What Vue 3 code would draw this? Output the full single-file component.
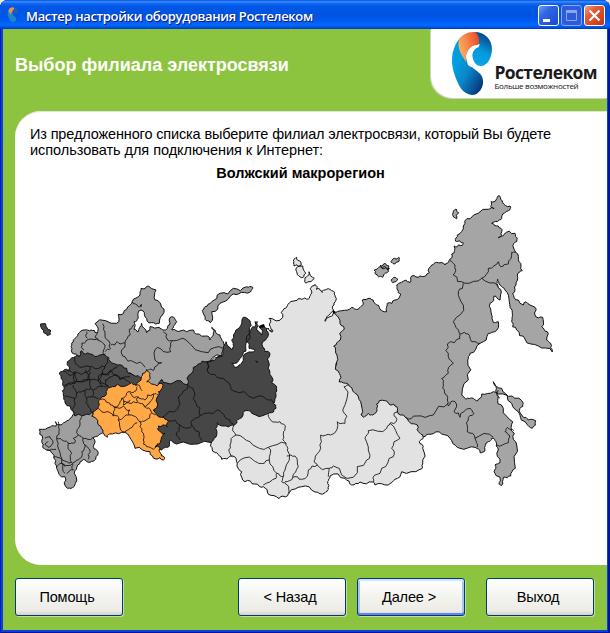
<script setup>
const macroRegions = [
  {
    name: 'far-east',
    shapes: [
      '333.3,311.7 341.7,310.7 351.7,307.3 358.3,309.3 361.7,306 362.3,300 370,298.3 375,303.3 380,309.3 386.7,311.7 387.3,303.3 395,300 400.7,294 397.7,290 396.7,285 406,280 410,282.7 411.7,276 420,276 429.3,272.7 431.7,265 436.7,262.3 445,265 449,260.7 451.7,254 454,246 456,247 462,245.5 463.5,243 460,241 455.5,241 457.3,235 463.3,226 470,218.8 488.3,209.3 494,209 490.7,206.7 491,201.7 496,199.5 499.3,195.7 502.7,202.7 510,206 508.3,210.7 502.7,214 501.7,218.3 497.3,221.7 491.7,223.3 498.3,226 501.7,231.7 498.3,237.7 504,234.3 515,233.3 517.3,238.3 514,243.3 515.7,252.3 519,261.7 522.3,270.7 517.3,275 516,285 512.7,293.3 518.3,300 523.3,305 526,301.7 535,307.3 535,315 542.7,317.3 541.7,326.7 547.3,331.7 546.7,340 550.7,343.3 552.3,352 538.3,346 525,339 516.7,330 511.7,321.7 512.3,313.3 509.3,301.7 505,290 500,285 497.7,279.3 496.7,283.3 500.7,289.3 500,300 494,296 490,303.3 491.7,315 493,322 498.3,321.7 495,331.7 488.3,333.3 480,343.3 470,353.3 467.7,360 468.3,380 466,399.3 473.3,398.3 477.3,401 481.7,394 493.3,391.7 498.3,396.7 503.3,408.3 512.7,421.7 514.3,433.3 516.7,445 515.3,468.3 510.7,476 503.3,477.3 501,485.7 499,484.3 500,477.3 494,471.7 495,465 500,462.7 498.3,450 496,441.7 491.7,438.3 488.3,441.7 485,450 480,452.7 475,447.3 460,448.3 451.7,440.7 441.7,434 430,434.3 423.3,436.7 405,432 380,425 360,425 345,392 335,382 330,345 331,330',
      '493.3,381.7 501.7,388.3 512,396 523.3,403.3 520,408.3 522.7,416.7 528.3,420 535.7,420.7 532.3,428.3 526,422.7 520,415 511.7,403.3 498.3,394 496,386.7',
      '453.3,211.7 456,209 458.7,212.7 456.7,218.7 453.5,217',
      '374.3,270 380,266.7 389.3,268.3 388.3,271.7 385.5,273 382.7,277.3 378.3,276.7 375,273.5',
      '380,265.5 385,263.5 389,266 388,270 382,268.5',
      '390.7,261.7 396,259 399.3,257.7 399.3,261 394,264',
      '391,280 395,277.3 398,279.3 392.7,282.7'
    ]
  },
  {
    name: 'north-west',
    shapes: [
      '71,346.7 73.3,340 78,334 85,330 91,330 96.7,333 97.3,326.7 95,323.7 116.7,323.3 118.3,314.3 126.7,309.3 132.3,301.7 140,295 141,288.3 148.3,286 156,290 155,300 160.7,304 162.3,315 159.3,323.3 151.7,322.7 145,316.7 141,310 138.3,318.3 134,321.7 134,329.3 138.3,331.7 141.7,323.3 146.7,332.7 150,326.7 159.3,327.3 163.3,330 170,324.3 171.7,316.7 176.7,321.7 173.3,326.7 172,330 180,331 193.3,330 196.7,334 206.7,336 210,340 213.3,335 211.7,327.3 215,330 220,335 223.3,341.7 223.5,350 221.7,356 208.3,366 198.3,374 190,390 160,390 140,390 110,370 82,358 74,354',
      '202.3,310.7 205,306.7 211.7,301.7 220,293.3 233.3,288.3 246.7,286.7 252.7,287.3 250.7,291.7 238.3,294 230,296.7 220,303.3 211.7,311.7 210,322.7 205,319.3 204,315'
    ]
  },
  {
    name: 'south',
    shapes: [
      '39.3,429.3 50.7,426.7 56,426 55.5,421.7 61,425 66.7,420.7 71.7,417.3 80,412 92,408 102,420 104,432 101.7,433.3 92.7,437.7 93.3,446.7 96.7,450 95.7,459.3 90,462.3 83.3,459.3 77.7,465 74.3,473.3 74,486.7 67.3,488.3 65,476.7 56.7,468.3 54,458.3 46.7,450 42.7,446.7 42.7,438.3'
    ]
  },
  {
    name: 'centre',
    shapes: [
      '81.7,350.7 90,354 100,355 108.3,357.3 110,361 117.3,365 126.7,368.3 133.3,375 143,377.3 140,392 105,408 91.7,412.7 81.7,416 75,416 73.3,411.7 65,402.7 63.3,395 64,386.7 62.7,380 59.3,374 63.3,370.7 69.3,370 70,360 75,356.7 80,356',
      '40.5,324 45.5,323.8 47.5,329 50.3,330 50.5,334.3 47.3,335.5 43.5,330.5'
    ]
  },
  {
    name: 'ural',
    shapes: [
      '243.3,317.3 250,320.7 249.3,330 246,343.3 246,351 240,358.3 231.7,363.3 235,367.3 241.7,363 247,353 255,350.7 249,348.3 250,333.3 251.5,328.3 255,327 255,321.7 257.3,321.7 256.7,330 261.7,335 259.3,326.7 263.3,325 268.3,330 280,340 285,400 280,416 250,422 240,430 222,436 211.7,442.7 183.3,442 170.7,440 169.3,446 165,447.3 161.7,450 154,448 150,430 150,395 161.7,379.3 173.3,382.7 187.3,385 191.7,373.3 198.3,364 206.7,361.7 221.7,356 223.3,346.7 226,341.7 231.7,350 234,346.7 231.7,340 236,330 241.7,323.3'
    ]
  },
  {
    name: 'siberia',
    shapes: [
      '266,330 268.3,328 272,332 272.7,330 269.3,325 269,318.3 282.7,317.3 284,308.7 288,304.3 295,300.7 301.7,299.3 308.3,299 310.7,294.3 310.3,288.3 315,284.3 317.3,286.7 316,289.3 322,291.3 328.3,288.7 334.7,292.3 336.3,298.3 334,305 332.7,311.7 330,314.3 326.7,316.7 325,321.3 329,317 334,312.3 340,320.7 344.3,329 340.3,340 333.7,346 337,355 336,364 339.3,373.3 339.3,382 347.3,383.3 352,388 355,393.3 360.7,401.7 361,415 364,417.3 368.3,413.3 372.7,415 376.7,408.3 379.3,400.7 385.7,400.7 390,405 394,404.3 397.3,410.7 405.3,417.3 410,422.7 417.3,425 420,433.3 423.3,437.3 419.3,441.7 422.7,448.3 422.7,464 420,469.3 401.7,471.7 395,479.3 388.3,485 375,485 372.7,482 360,482 351.7,485 345,478.3 330,476 327.7,481.7 328.3,489.3 325,492.7 315,492 301.7,486.7 289.3,492.7 287.7,495.7 279,498.7 268.3,494.3 263.3,486.7 255,484 245,481.7 241.7,471.7 237.3,463.3 232.7,456 228.3,457.7 221.7,459.3 216.7,452.7 212.3,450 211.7,441.7 216.7,435 215.7,428.3 217.3,422.7 222.7,426 234,425 236.7,420.7 241.7,417.7 244,411.3 251.7,413.3 266.7,414 269.3,412.7 276,408.3 273.3,402.7 276,395 276.7,386.7 271.7,376.7 269.3,365 270,353.3 262.7,346.7 266.7,338.3',
      '293.3,260 296.7,257.3 300.7,261.7 300,266 294,266',
      '296,268.3 302.7,266 305.7,273.3 303.3,277.3 297.3,274.7',
      '309,271.7 314.3,278.3 310,281.7 306,283.3 306.7,276.7'
    ]
  },
  {
    name: 'volga',
    shapes: [
      '146.7,369.3 150,373.3 146.7,381.7 151.7,384 162.3,383.3 162.7,387.3 158.3,391.7 157.3,396.7 153.3,410 161.7,417.3 168.3,421.7 167.3,426.7 158.3,426 159.3,430.7 165,433.3 161.7,436.7 155,446.7 159.3,447.3 160,452.7 164.3,457.3 163.3,460 156,459 150,451.7 135,448.3 131,439.3 121.7,432.3 109.3,434 107.3,437.3 104,434 101,426.7 91.7,416 92.7,411.7 98.3,406.7 99.3,400 106,395 107.3,388.3 117.3,384 131.7,382.7 136,385 141,380 142.7,373.3'
    ]
  }
]

// Borders inside the macro regions, grouped by map tile; units are a third of a map unit.
const borderTiles = [
  {
    x: 30, y: 370,
    lines: [
      '210,88 235,98 250,110 265,105 275,85 285,80 300,65 318,62 322,50',
      '205,115 230,125 250,138 255,115 250,108', '255,112 280,108 300,120 298,135 265,150 265,140 250,138',
      '275,85 280,105 300,100 322,98 325,82 305,75 300,68', '280,95 300,90',
      '298,135 322,145 330,155 345,152 365,128 350,115 342,108 325,98', '325,80 345,90 370,72 385,75',
      '342,108 358,100 370,72', '265,150 272,180 285,187 300,175 322,158', '330,155 335,185 340,210 350,230 370,238 383,220',
      '365,128 380,135', '315,45 330,50 336,62',
      '105,45 125,42 140,32 155,35 180,30 175,12 165,0', '140,32 135,8 110,0', '105,78 135,85 140,70 130,45',
      '140,70 165,60 183,55 180,30', '135,85 132,110 130,130', '165,60 170,85 185,80 190,60 215,50 205,30 180,30',
      '170,85 175,110 185,128', '185,80 205,85', '183,55 190,60', '205,30 215,10 235,15 245,0', '215,50 235,48 225,30 245,20 275,25 300,38',
      '85,155 88,178 80,205 100,212 115,220 135,218 130,205 145,195 150,165 155,140',
      '80,205 85,235 110,275 125,278 125,250 115,220', '145,195 160,205 188,203', '160,205 165,225 155,245 150,265 128,278',
      '165,225 180,240 175,268', '50,240 78,238', '70,262 95,268 105,290', '80,290 100,282 128,280 130,300 110,310',
      '100,282 105,310', '45,205 60,200 68,212 55,232 45,222 55,215'
    ]
  },
  {
    x: 30, y: 280,
    lines: [
      '135,230 150,262 180,260 205,265 225,260 232,235', '100,275 125,285 135,275 175,275 180,262', '135,275 135,305 100,318',
      '135,305 175,300 180,275', '225,260 215,285 210,310 235,320', '215,285 245,275 262,258', '245,275 270,300 300,290',
      '162,210 155,190 168,182 200,178 225,195 222,225', '170,155 172,175', '202,155 195,172 205,180',
      '218,131 225,165 240,190 242,205 225,215', '242,195 262,185 285,188 275,210 285,230 310,245 345,262',
      '285,188 300,165 298,148 312,135', '307,65 325,80 335,78'
    ]
  },
  {
    x: 130, y: 280,
    lines: ['100,155 110,175 130,182 168,180 235,218 278,205', '128,182 122,215 82,202 75,240 95,248 72,270 55,270', '278,228 232,248 232,270']
  },
  {
    x: 130, y: 360,
    lines: [
      '97,172 125,155 145,140 145,110 175,75 195,100 198,130 210,145 210,168 185,182 190,200 215,240', '115,182 150,195 185,198',
      '150,195 138,225 150,240', '210,168 260,150 285,172 310,192', '230,5 235,38 270,55 300,75 310,92 370,115 410,118 435,128'
    ]
  },
  {
    x: 200, y: 370,
    lines: [
      '208,128 212,150 240,155 255,175 250,195 258,220 205,232 190,238 150,215 108,195 102,165', '108,195 90,225 92,255 98,262',
      '205,232 208,270 175,280 160,270 112,280', '208,270 230,310 228,325 190,345', '230,310 250,320 245,335 262,345 265,370',
      '258,220 262,240 255,300 250,320', '260,258 285,258 295,290 278,322 255,335',
      '278,322 305,328 325,300 352,285 345,268 362,235 362,195 392,195 412,155 435,160 440,140 428,120 432,50 448,45',
      '352,285 388,295 385,320'
    ]
  },
  {
    x: 320, y: 360,
    lines: [
      '28,325 40,318 100,352 140,300 145,270 135,235 145,212 200,205 210,190 240,235 215,265 220,290 185,325 165,345 160,366',
      '210,190 228,185 222,160 232,152', '256,172 290,168 340,165 385,130'
    ]
  },
  {
    x: 420, y: 190,
    lines: [
      '90,212 105,225 100,255 135,280 185,265 235,290', '185,265 205,235 235,215 242,230 265,222 275,187 287,187',
      '130,280 115,305 130,345 100,395 118,430 120,445 82,462 85,500 100,520 85,550 65,565 68,595 80,615 83,645',
      '120,432 145,432 155,455 180,460', '83,648 105,635 102,665 120,682 150,655 162,670 145,690 142,725 165,745 172,772',
      '165,745 220,742', '230,765 265,758 268,735 255,725 262,712 282,722', '235,600 240,625'
    ]
  }
]

const noise = (x, y, salt) => {
  const v = Math.sin(x * 12.9898 + y * 78.233 + salt * 37.719) * 43758.5453
  return v - Math.floor(v) - 0.5
}

// Splits every segment and pushes the new points sideways, so edges read as coastline.
function roughen(points, rounds, closed) {
  let list = points
  for (let r = 0; r < rounds; r++) {
    const next = []
    const last = closed ? list.length : list.length - 1
    for (let i = 0; i < last; i++) {
      const [ax, ay] = list[i]
      const [bx, by] = list[(i + 1) % list.length]
      const k = noise(ax + bx, ay + by, r) * 0.5
      next.push([ax, ay], [(ax + bx) / 2 - (by - ay) * k, (ay + by) / 2 + (bx - ax) * k])
    }
    if (!closed) next.push(list[list.length - 1])
    list = next
  }
  return list
}

const parse = (s) => s.split(' ').map((p) => p.split(',').map(Number))
const toPath = (pts, closed) => 'M' + pts.map(([x, y]) => x.toFixed(1) + ' ' + y.toFixed(1)).join('L') + (closed ? 'Z' : '')

const regions = macroRegions.map((m) => ({
  name: m.name,
  d: m.shapes.map((s) => toPath(roughen(parse(s), 2, true), true)).join('')
}))
const borders = borderTiles
  .flatMap((t) => t.lines.map((l) => toPath(roughen(parse(l).map(([x, y]) => [t.x + x / 3, t.y + y / 3]), 2, false), false)))
  .join('')
</script>

<template>
  <div class="window">
    <header class="titlebar">
      <svg class="app-icon" viewBox="0 0 16 18">
        <path d="M4 2C1 5 1 9 3 12c1 3 3 5 5 4 3-1 3-4 0-6-2-2-2-5 0-6Z" fill="#1b86c8" />
        <path d="M2.500 5C3 2 6 0 8.500 2 8 4 5 5 5 9Z" fill="#f58b4a" />
        <path d="M8 1.500c4 0 5 5 2 6.500C8 9 7 6 9 4Z" fill="#1268b0" />
      </svg>
      <h1>Мастер настройки оборудования Ростелеком</h1>
      <div class="controls">
        <button class="ctl"><svg viewBox="0 0 21 21"><path d="M5 14h7v3H5z" fill="#fff" /></svg></button>
        <button class="ctl off"><svg viewBox="0 0 21 21"><path d="M5.500 5.500h10v10h-10zM5 6.500h11" fill="none" stroke="#8ea4ec" /><path d="M5 5h11v3H5z" fill="#8ea4ec" /></svg></button>
        <button class="ctl close"><svg viewBox="0 0 21 21"><path d="M5.500 5.500l10 10M15.500 5.500l-10 10" stroke="#fff" stroke-width="2.200" /></svg></button>
      </div>
    </header>
    <div class="client">
      <div class="banner">
        <h2>Выбор филиала электросвязи</h2>
        <div class="brand">
          <svg viewBox="0 0 64.500 70">
            <defs>
              <linearGradient id="tail" x1="0" y1="0" x2="1" y2="1">
                <stop offset="0.300" stop-color="#009fe0" /><stop offset="0.550" stop-color="#0b86c9" /><stop offset="0.900" stop-color="#063a7c" />
              </linearGradient>
              <linearGradient id="head" x1="0.600" y1="0" x2="0.300" y2="1">
                <stop offset="0" stop-color="#073d80" /><stop offset="0.550" stop-color="#0798dc" /><stop offset="1" stop-color="#06a5e7" />
              </linearGradient>
              <linearGradient id="flame" x1="0" y1="0.500" x2="1" y2="0.200">
                <stop offset="0" stop-color="#fbb066" /><stop offset="0.400" stop-color="#f6894b" /><stop offset="1" stop-color="#ec4a24" />
              </linearGradient>
            </defs>
            <path d="M31 8C22 17 20 31 24 44c4 12 8 21 18 22 7 0 12-8 11-15-1-7-7-9-11-13-7-7-9-17-4-25Z" fill="url(#tail)" />
            <path d="M43 3c10-1 19 6 19 17 0 9-5 17-11 17-6 0-9-5-9-10 0-5 3-8 7-9Z" fill="url(#head)" />
            <path d="M38 36c-3-8-2-17 4-20 3-2 6-2 8 0-6 3-9 8-7 14 1 3 2 4 4 6-3 3-5 3-9 0Z" fill="#fff" />
            <path d="M28.500 12C31 6 37 2.500 45 3c4 3 5 9 3 13-8-1-13 8-12 17-4-7-8-11-7.500-21Z" fill="url(#flame)" />
          </svg>
          <div class="brand-text">
            <strong>Ростелеком</strong>
            <span>Больше возможностей</span>
          </div>
        </div>
      </div>
      <main class="panel">
        <p><span class="first">Из предложенного списка выберите филиал электросвязи, который Вы будете</span><br /><span class="second">использовать для подключения к Интернет:</span></p>
        <h3>Волжский макрорегион</h3>
        <svg class="map" viewBox="30 185 540 330">
          <path v-for="r in regions" :key="r.name" :class="['region', r.name]" :d="r.d" />
          <path class="border" :d="borders" />
          <path class="islets" d="M333 310l3 2-3 2zM321 291l2 1-1 1zM259 326l5-2 1 3-5 1zM255 360l3 2-1 1zM140 305l2-1-1 3z" />
        </svg>
      </main>
      <footer>
        <button class="btn">Помощь</button>
        <button class="btn back">&lt; Назад</button>
        <button class="btn next">Далее &gt;</button>
        <button class="btn exit">Выход</button>
      </footer>
    </div>
  </div>
</template>

<style>
body { margin: 0; background: #ece9d8; }
</style>

<style scoped>
.window {
  box-sizing: border-box;
  width: 610px;
  height: 633px;
  display: flex;
  flex-direction: column;
  border-radius: 8px 8px 0 0;
  overflow: hidden;
  background: #0a3fe0;
  box-shadow: inset 1px 0 #0020b8, inset -2px 0 #001898, inset 0 -1px #001898;
  font-family: "Liberation Sans", Arial, sans-serif;
}
h1, h2, h3, p { margin: 0; font-weight: normal; }
.titlebar {
  box-sizing: border-box;
  height: 29px;
  padding: 1px 5px 0 6px;
  display: flex;
  align-items: center;
  background: linear-gradient(#0050d8 0, #3a8cff 6%, #1267f2 12%, #0058e6 22%, #0054e0 50%, #005cf2 72%, #0668ff 86%, #0058e8 93%, #0038b8 100%);
}
.app-icon { width: 16px; height: 18px; }
h1 {
  flex: 1;
  padding: 1px 0 0 4px;
  font: 600 13px/20px "Open Sans", "Noto Sans", sans-serif;
  letter-spacing: -0.350px;
  white-space: nowrap;
  color: #fff;
  text-shadow: 1px 1px 0 #0a1883;
}
.controls { display: flex; gap: 2px; padding-top: 1px; }
.ctl {
  box-sizing: border-box;
  width: 21px;
  height: 21px;
  padding: 0;
  border: 1px solid #fff;
  border-radius: 3px;
  background: linear-gradient(135deg, #6f9cf5, #3065e4 35%, #2456dc 70%, #1a48c8);
}
.ctl svg { display: block; width: 21px; height: 21px; margin: -1px; }
.ctl.off { border-color: #8ea4ec; background: #2c5bdc; }
.ctl.close { background: linear-gradient(135deg, #f0a088, #e25a38 35%, #d8451e 70%, #b83410); }
.client {
  box-sizing: border-box;
  height: 601px;
  margin: 0 3px 3px;
  display: flex;
  flex-direction: column;
  background: #8cc43f;
}
.banner { height: 82px; display: flex; justify-content: space-between; }
h2 {
  padding: 25px 0 0 12px;
  font-size: 18px;
  line-height: 22px;
  font-weight: bold;
  color: #fff;
}
.brand {
  box-sizing: border-box;
  width: 176px;
  height: 69px;
  display: flex;
  overflow: hidden;
  background: #fff;
  border-radius: 0 0 0 22px;
  box-shadow: -1px 1px 0 #ccd6c0;
}
.brand svg { flex: none; width: 64.500px; height: 70px; margin-left: -1px; }
.brand-text {
  display: flex;
  flex-direction: column;
  padding-top: 34px;
  font-family: "Open Sans", "Noto Sans", sans-serif;
  white-space: nowrap;
}
.brand-text strong { font-size: 17.500px; line-height: 18px; letter-spacing: -0.650px; color: #1c1a1b; }
.brand-text span { font-size: 8px; line-height: 10px; letter-spacing: -0.300px; color: #111; }
.panel {
  box-sizing: border-box;
  height: 454px;
  margin-left: 12px;
  padding: 15px 0 0;
  background: #fff;
  border-radius: 26px 0 0 26px;
  box-shadow: inset 0 1px 0 #dfe5d8;
}
p { padding-left: 15px; font-size: 14.500px; line-height: 16px; color: #000; white-space: nowrap; }
.first { letter-spacing: -0.145px; }
.second { letter-spacing: -0.04px; }
h3 {
  padding-top: 7px;
  width: 571px;
  text-align: center;
  font-size: 14.500px;
  line-height: 16px;
  font-weight: bold;
}
.map { display: block; width: 540px; height: 330px; margin: 4px 0 0 15px; }
.region { stroke: #111; stroke-width: 1; stroke-linejoin: round; }
.far-east { fill: #a5a5a5; }
.north-west, .south { fill: #9f9f9f; }
.centre { fill: #4a4a4a; }
.ural { fill: #464646; }
.siberia { fill: #e2e2e2; }
.volga { fill: #ffa845; }
.border { fill: none; stroke: #111; stroke-width: 0.850; }
.islets { fill: #000; }
footer { display: flex; padding: 13px 0 0 12px; }
.btn {
  box-sizing: border-box;
  width: 108px;
  height: 38px;
  padding: 0 4px 0 0;
  border: 1px solid #003c74;
  border-radius: 3px;
  background: linear-gradient(#fff, #f4f4f0 45%, #ecebe6 88%, #d8d0c4);
  box-shadow: 1px 1px 0 #c3dca0;
  font: 14.500px "Liberation Sans", Arial, sans-serif;
  letter-spacing: -0.150px;
  color: #000;
}
.back { margin-left: 115px; }
.next {
  margin-left: 11px;
  box-shadow: inset 0 2px #cee7ff, inset 0 -2px #6982ee, inset 2px 0 #a8c4f4, inset -2px 0 #a8c4f4, 1px 1px 0 #c3dca0;
}
.exit { margin-left: 21px; }
</style>
